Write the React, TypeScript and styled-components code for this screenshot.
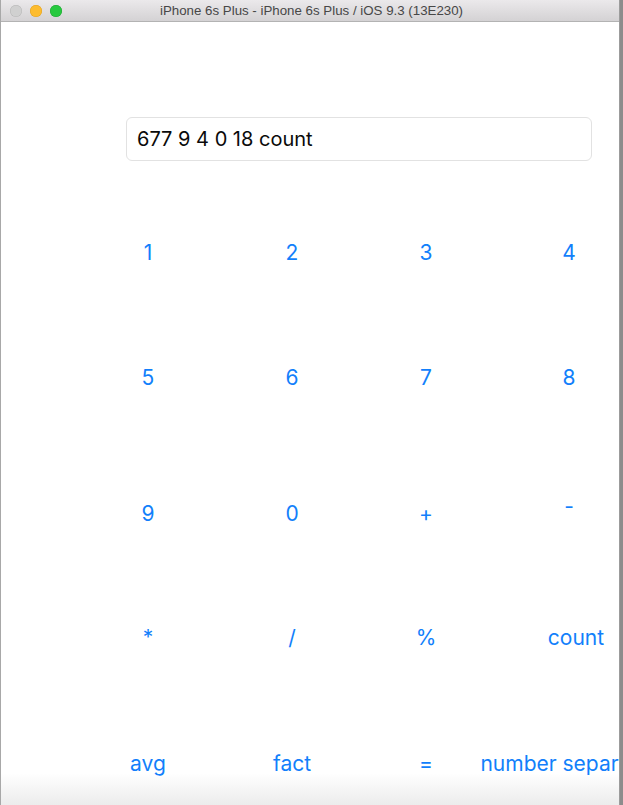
import React from 'react';
import styled, {createGlobalStyle} from 'styled-components';

const GlobalStyle = createGlobalStyle`
  html, body {
    margin: 0;
    padding: 0;
    background: #8c8c8c;
    overflow: hidden;
  }
`;

const Window = styled.div`
  display: flex;
  flex-direction: column;
  width: 620px;
  height: 805px;
  border-left: 1px solid #a8a8a8;
  border-right: 1px solid #9c9c9c;
  box-sizing: border-box;
  background: #fff;
`;

const TitleBar = styled.div`
  display: flex;
  align-items: center;
  height: 22px;
  flex-shrink: 0;
  padding-left: 9px;
  background: linear-gradient(#ebe9eb, #d4d2d4);
  border-bottom: 1px solid #b3b3b3;
  box-sizing: border-box;
  font-family: 'Liberation Sans', Arial, sans-serif;
  font-size: 13.3px;
  color: #474747;
`;

const Lights = styled.div`
  display: flex;
  gap: 8px;
`;

const Light = styled.span<{color: string; edge: string}>`
  width: 12px;
  height: 12px;
  border-radius: 50%;
  background: ${p => p.color};
  box-shadow: inset 0 0 0 0.5px ${p => p.edge};
`;

const Title = styled.div`
  flex: 1;
  text-align: center;
  padding-right: 58px;
`;

const Screen = styled.div`
  flex: 1;
  overflow: hidden;
  display: flex;
  flex-direction: column;
  background: linear-gradient(#fff 0, #fff calc(100% - 32px), #ececec 100%);
  font-family: Inter, 'Noto Sans', sans-serif;
`;

const Input = styled.div`
  margin: 95px 0 0 125px;
  width: 466px;
  height: 44px;
  box-sizing: border-box;
  display: flex;
  align-items: center;
  padding-left: 10px;
  border: 1px solid #e2e2e2;
  border-radius: 6px;
  font-size: 20px;
  color: #0a0a0a;
`;

const Keypad = styled.div`
  display: grid;
  grid-template-columns: 144px 144px 124px 162px;
  grid-template-rows: 125px 136px 124px 126px 40px;
  margin: 80px 0 0 75px;
`;

const Key = styled.button<{dx?: number; dy?: number}>`
  justify-self: center;
  align-self: start;
  height: 24px;
  padding: 0;
  border: none;
  background: none;
  white-space: nowrap;
  font-family: inherit;
  font-size: 21px;
  line-height: 24px;
  color: #127ffb;
  transform: translate(${p => p.dx ?? 0}px, ${p => p.dy ?? 0}px);
`;

const keys: {label: string; dx?: number; dy?: number}[] = [
  {label: '1'}, {label: '2'}, {label: '3'}, {label: '4'},
  {label: '5'}, {label: '6'}, {label: '7'}, {label: '8'},
  {label: '9'}, {label: '0'}, {label: '+'}, {label: '-', dy: -7},
  {label: '*'}, {label: '/'}, {label: '%'}, {label: 'count', dx: 7},
  {label: 'avg'}, {label: 'fact'}, {label: '='}, {label: 'number separator'},
];

function App() {
  return (
    <>
      <GlobalStyle />
      <Window>
        <TitleBar>
          <Lights>
            <Light color="#d0d0d0" edge="#b6b6b6" />
            <Light color="#fdbc2e" edge="#e0a021" />
            <Light color="#27c93f" edge="#1ea532" />
          </Lights>
          <Title>iPhone 6s Plus - iPhone 6s Plus / iOS 9.3 (13E230)</Title>
        </TitleBar>
        <Screen>
          <Input>677 9 4 0 18 count</Input>
          <Keypad>
            {keys.map(k => (
              <Key key={k.label} dx={k.dx} dy={k.dy}>
                {k.label}
              </Key>
            ))}
          </Keypad>
        </Screen>
      </Window>
    </>
  );
}

export default App;
